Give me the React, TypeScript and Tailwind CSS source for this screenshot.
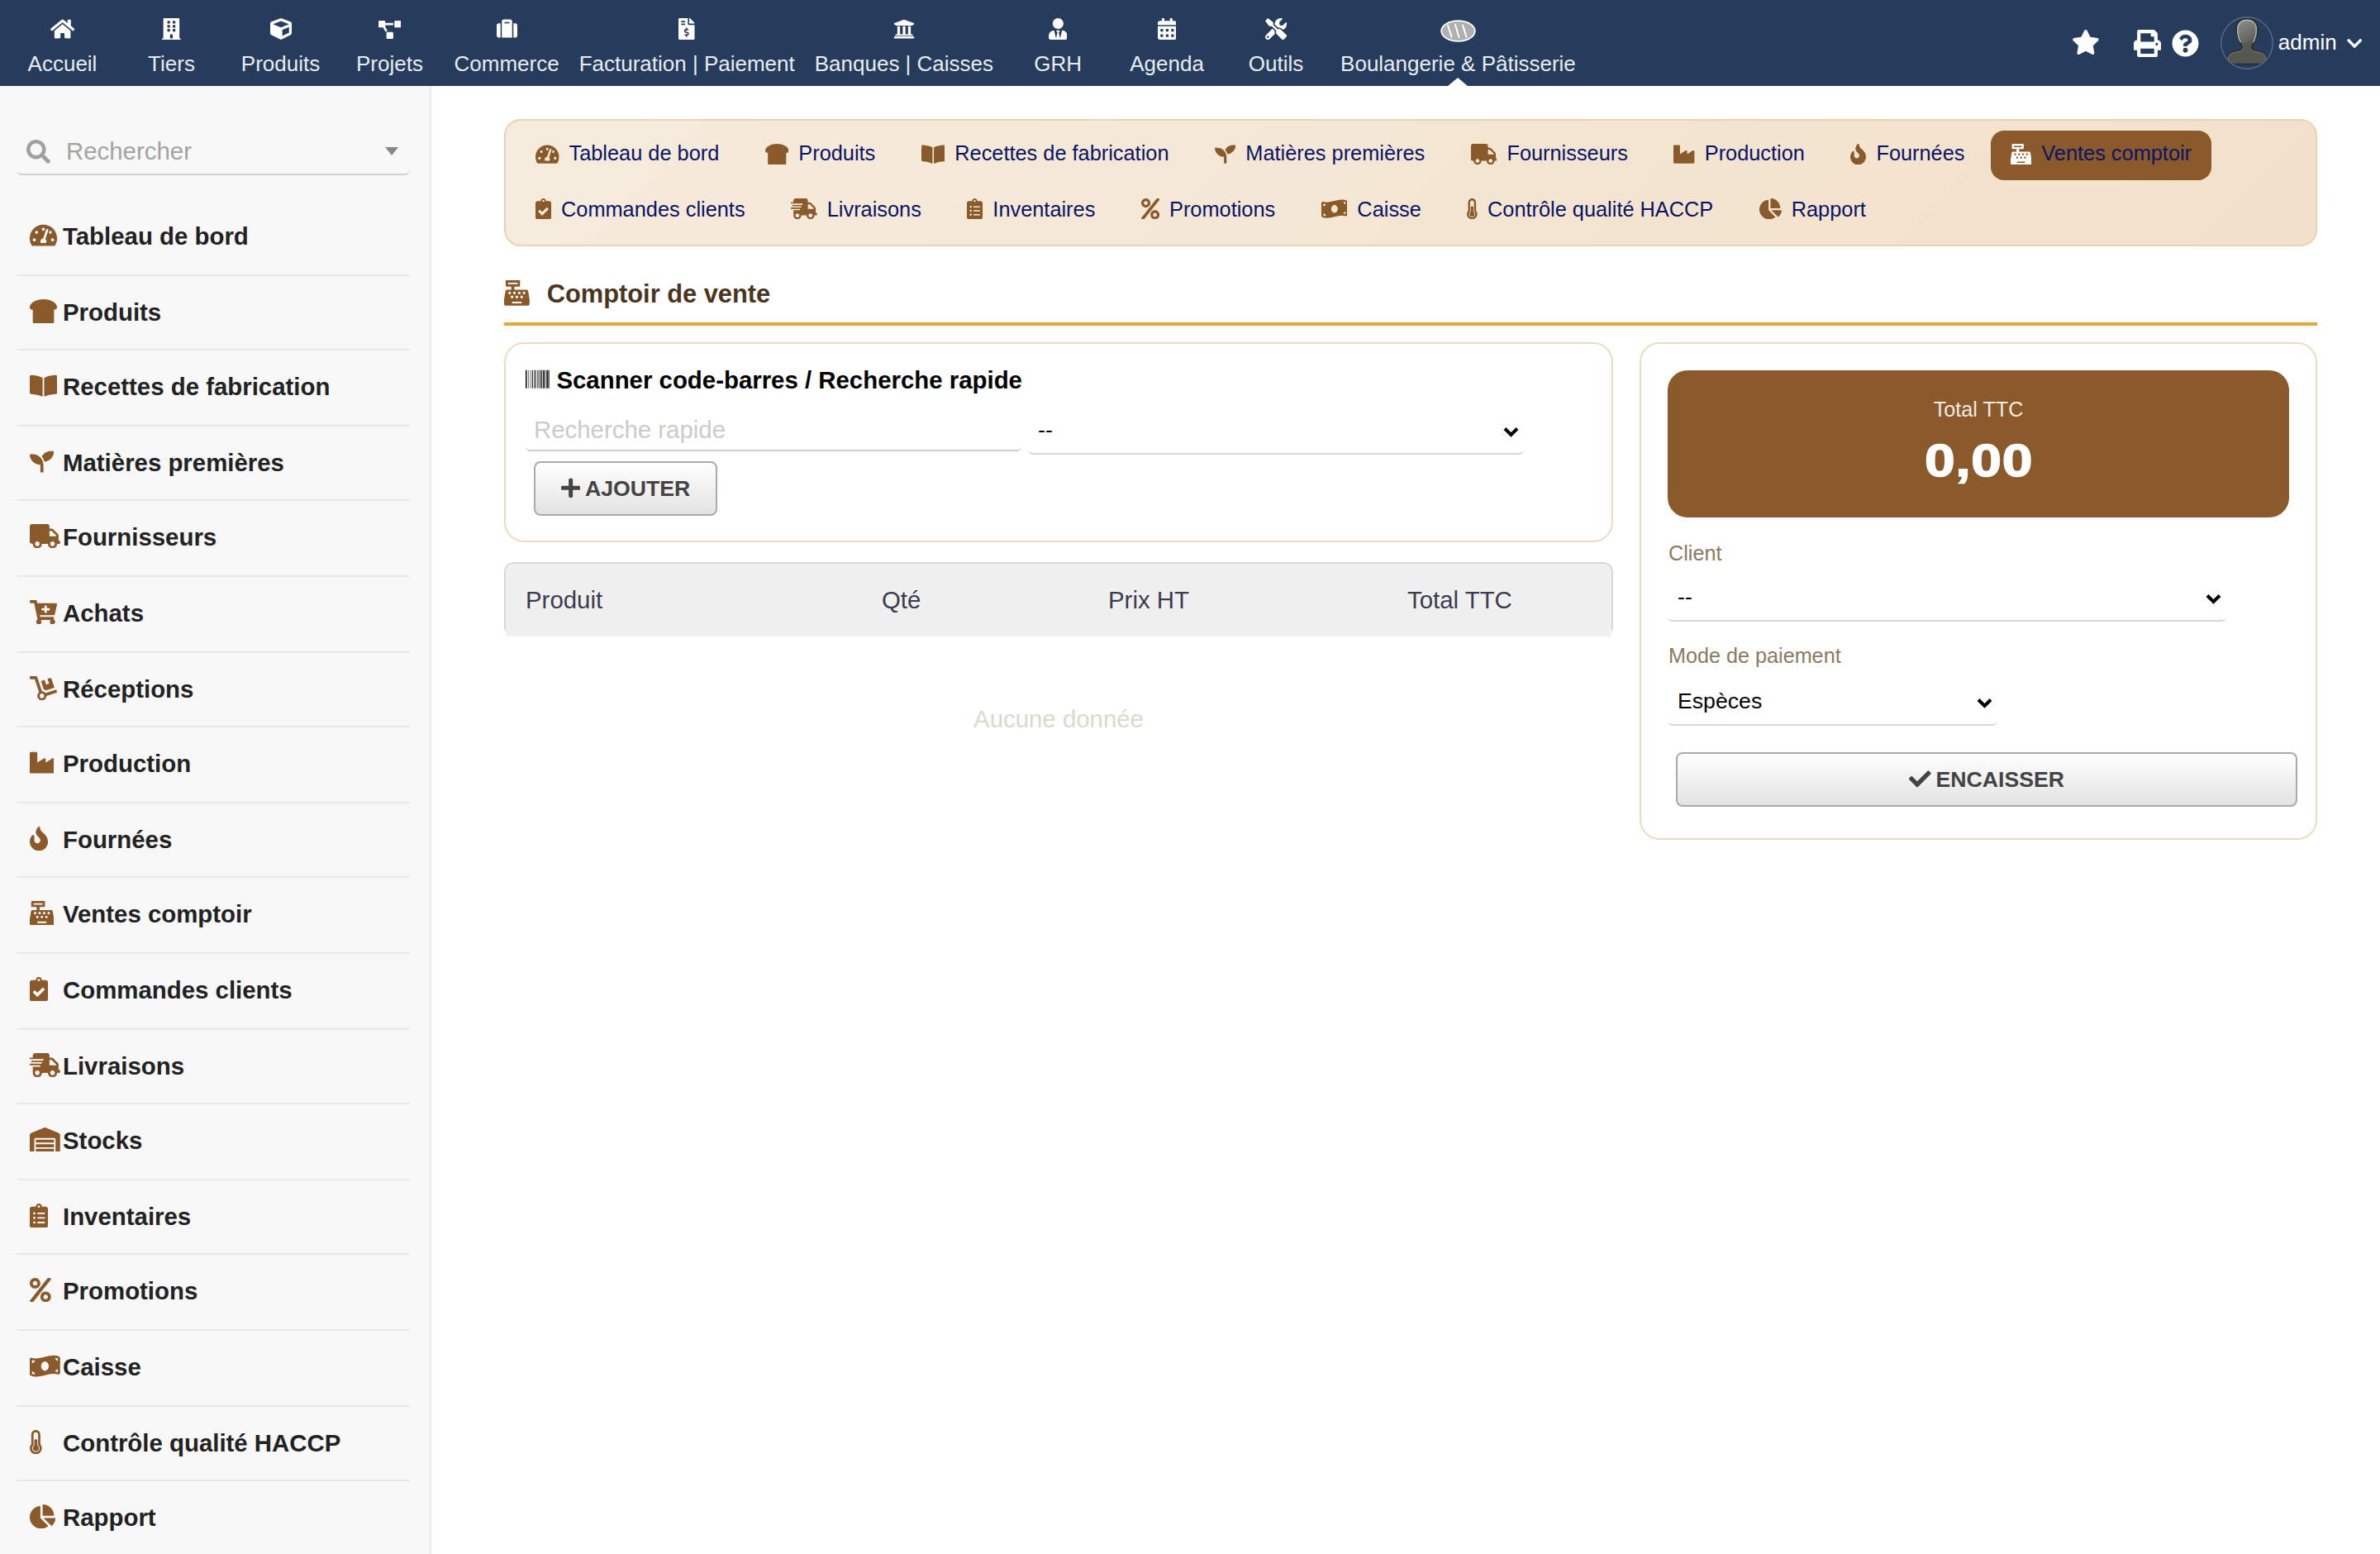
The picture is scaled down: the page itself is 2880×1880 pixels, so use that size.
import React from 'react';
import { IconContext, type IconType } from 'react-icons';
import {
  FaBarcode,
  FaBookOpen,
  FaBreadSlice,
  FaBuilding,
  FaCalendarAlt,
  FaCartPlus,
  FaCashRegister,
  FaChartPie,
  FaCheck,
  FaChevronDown,
  FaClipboardCheck,
  FaClipboardList,
  FaCube,
  FaDolly,
  FaFileInvoiceDollar,
  FaFire,
  FaHome,
  FaIndustry,
  FaMoneyBillWave,
  FaPercent,
  FaPlus,
  FaPrint,
  FaProjectDiagram,
  FaQuestionCircle,
  FaSearch,
  FaSeedling,
  FaShippingFast,
  FaStar,
  FaSuitcase,
  FaTachometerAlt,
  FaThermometerHalf,
  FaTools,
  FaTruck,
  FaUniversity,
  FaUserTie,
  FaWarehouse,
} from 'react-icons/fa';

type Entry = { label: string; icon: IconType; active?: boolean };

const topMenu: { label: string; icon: IconType; size: string }[] = [
  { label: 'Accueil', icon: FaHome, size: 'h-[26px]' },
  { label: 'Tiers', icon: FaBuilding, size: 'h-[26px]' },
  { label: 'Produits', icon: FaCube, size: 'h-[26px]' },
  { label: 'Projets', icon: FaProjectDiagram, size: 'h-[22px] mt-[2px]' },
  { label: 'Commerce', icon: FaSuitcase, size: 'h-[25px]' },
  { label: 'Facturation | Paiement', icon: FaFileInvoiceDollar, size: 'h-[26px]' },
  { label: 'Banques | Caisses', icon: FaUniversity, size: 'h-[26px]' },
  { label: 'GRH', icon: FaUserTie, size: 'h-[26px]' },
  { label: 'Agenda', icon: FaCalendarAlt, size: 'h-[26px]' },
  { label: 'Outils', icon: FaTools, size: 'h-[26px]' },
];

const sideMenu: { label: string; icon: IconType; height: string }[] = [
  { label: 'Tableau de bord', icon: FaTachometerAlt, height: 'h-[92px]' },
  { label: 'Produits', icon: FaBreadSlice, height: 'h-[90px]' },
  { label: 'Recettes de fabrication', icon: FaBookOpen, height: 'h-[92px]' },
  { label: 'Matières premières', icon: FaSeedling, height: 'h-[90px]' },
  { label: 'Fournisseurs', icon: FaTruck, height: 'h-[92px]' },
  { label: 'Achats', icon: FaCartPlus, height: 'h-[92px]' },
  { label: 'Réceptions', icon: FaDolly, height: 'h-[90px]' },
  { label: 'Production', icon: FaIndustry, height: 'h-[92px]' },
  { label: 'Fournées', icon: FaFire, height: 'h-[90px]' },
  { label: 'Ventes comptoir', icon: FaCashRegister, height: 'h-[92px]' },
  { label: 'Commandes clients', icon: FaClipboardCheck, height: 'h-[92px]' },
  { label: 'Livraisons', icon: FaShippingFast, height: 'h-[90px]' },
  { label: 'Stocks', icon: FaWarehouse, height: 'h-[92px]' },
  { label: 'Inventaires', icon: FaClipboardList, height: 'h-[90px]' },
  { label: 'Promotions', icon: FaPercent, height: 'h-[92px]' },
  { label: 'Caisse', icon: FaMoneyBillWave, height: 'h-[92px]' },
  { label: 'Contrôle qualité HACCP', icon: FaThermometerHalf, height: 'h-[90px]' },
  { label: 'Rapport', icon: FaChartPie, height: 'h-[92px]' },
];

const navRowOne: Entry[] = [
  { label: 'Tableau de bord', icon: FaTachometerAlt },
  { label: 'Produits', icon: FaBreadSlice },
  { label: 'Recettes de fabrication', icon: FaBookOpen },
  { label: 'Matières premières', icon: FaSeedling },
  { label: 'Fournisseurs', icon: FaTruck },
  { label: 'Production', icon: FaIndustry },
  { label: 'Fournées', icon: FaFire },
  { label: 'Ventes comptoir', icon: FaCashRegister, active: true },
];

const navRowTwo: Entry[] = [
  { label: 'Commandes clients', icon: FaClipboardCheck },
  { label: 'Livraisons', icon: FaShippingFast },
  { label: 'Inventaires', icon: FaClipboardList },
  { label: 'Promotions', icon: FaPercent },
  { label: 'Caisse', icon: FaMoneyBillWave },
  { label: 'Contrôle qualité HACCP', icon: FaThermometerHalf },
  { label: 'Rapport', icon: FaChartPie },
];

function BreadLogo() {
  return (
    <svg className="mt-[6px] h-[27px] w-[43px] shrink-0" viewBox="0 0 43 27" fill="none">
      <ellipse cx="21.5" cy="13.5" rx="20.3" ry="12.3" fill="#b0b0b0" stroke="#fff" strokeWidth="1.8" />
      <path d="M9 6.5 L13.5 20.5 M18 6 L22.5 21 M27 6.5 L31.5 20.5" stroke="#fff" strokeWidth="2" strokeLinecap="round" />
    </svg>
  );
}

function Avatar() {
  return (
    <svg className="ml-[26px] h-16 w-16 shrink-0" viewBox="0 0 64 64" fill="none">
      <defs>
        <linearGradient id="skin" x1="22" y1="4" x2="38" y2="36" gradientUnits="userSpaceOnUse">
          <stop offset="0" stopColor="#8e8f8c" />
          <stop offset="0.8" stopColor="#5f615d" />
          <stop offset="0.82" stopColor="#555751" />
        </linearGradient>
        <clipPath id="round">
          <circle cx="32" cy="32" r="31" />
        </clipPath>
      </defs>
      <g clipPath="url(#round)">
        <path
          d="M32 2.8c8 0 12.8 4.8 12.8 12.5 0 3.5-.6 6.4-1.6 10.2-.9 4-3.2 7-5 9.5-.6 2.5 0 4.5 2 5.5 4 2 9.5 1.5 13.3 4.5 2.5 2 3.5 5 3.5 12.5H7c0-7.5 1-10.5 3.5-12.5 3.8-3 9.3-2.5 13.3-4.5 2-1 2.6-3 2-5.5-1.8-2.5-4.1-5.5-5-9.500-1-3.800-1.600-6.700-1.600-10.200C19.200 7.600 24 2.800 32 2.800z"
          fill="url(#skin)"
          stroke="#2b2d2c"
          strokeWidth="1.6"
        />
        <path
          d="M24.5 31c-2-3-3.8-9.5-3.8-15.7C20.7 8.6 25 4.5 32 4.5s11.3 4.1 11.3 10.8c0 6.2-1.8 12.7-3.8 15.7"
          stroke="#b4b5b2"
          strokeWidth="1.4"
        />
        <path d="M9 52c1.5-8 5.5-8 10-9 4-.8 8-1.5 8.5-4.5M55 52c-1.5-8-5.5-8-10-9-4-.8-8-1.5-8.5-4.5" stroke="#7b7d78" strokeWidth="1" />
      </g>
      <circle cx="32" cy="32" r="31.2" stroke="#56688a" strokeWidth="1.5" />
    </svg>
  );
}

function TopBar() {
  return (
    <header className="flex h-[104px] shrink-0 items-start bg-[#263c5c] pl-[9.5px] pr-[22px] text-[26px] leading-[28px] text-white">
      {topMenu.map(({ label, icon: Icon, size }) => (
        <div key={label} className="flex min-w-[132px] flex-col items-center px-3 pt-[21px]">
          <div className="flex h-[27px] items-center">
            <Icon className={`${size} w-auto`} />
          </div>
          <span className="mt-[15px] whitespace-nowrap text-[#e9ebef]">{label}</span>
        </div>
      ))}
      <div className="relative flex h-[104px] flex-col items-center px-3 pt-[21px]">
        <div className="flex h-[27px] items-center">
          <BreadLogo />
        </div>
        <span className="mt-[15px] whitespace-nowrap text-[#e9ebef]">Boulangerie &amp; Pâtisserie</span>
        <div className="absolute bottom-0 left-1/2 -ml-3 h-0 w-0 border-x-[12px] border-b-[10px] border-x-transparent border-b-white" />
      </div>

      <div className="ml-auto flex h-[104px] items-center">
        <FaStar className="mb-0.5 h-[30px] w-auto" />
        <FaPrint className="ml-[41px] h-[33px] w-auto" />
        <FaQuestionCircle className="ml-[13px] h-[33px] w-auto" />
        <Avatar />
        <span className="mb-0.5 ml-[6px]">admin</span>
        <FaChevronDown className="ml-3 h-[21px] w-auto" />
      </div>
    </header>
  );
}

function SideBar() {
  return (
    <aside className="w-[522px] shrink-0 border-r-2 border-[#e9e9e9] bg-[#f8f8f8] pl-5 pr-6">
      <div className="mt-[50px] flex h-[58px] items-center rounded-md border-b-2 border-[#d0d0d0] pl-3 pr-[14px] pt-[2px]">
        <FaSearch className="h-[29px] w-auto text-[#a0a0a0]" />
        <span className="ml-[19px] text-[29.4px] leading-8 text-[#a3a3a3]">Rechercher</span>
        <span className="ml-auto h-0 w-0 border-x-8 border-t-[10px] border-x-transparent border-t-[#888888]" />
      </div>
      <nav className="mt-[30px]">
        {sideMenu.map(({ label, icon: Icon, height }) => (
          <a
            key={label}
            className={`${height} flex items-start border-b-2 border-[#e9e9e9] pl-4 pt-[28px] text-[29.4px] font-bold leading-8 text-[#222222] last:border-b-0`}
          >
            <span className="w-10 shrink-0 text-[#8b5a2b]">
              <Icon className="h-[29.4px] w-auto" />
            </span>
            <span className="whitespace-nowrap">{label}</span>
          </a>
        ))}
      </nav>
    </aside>
  );
}

function NavRow({ items, iconOffset }: { items: Entry[]; iconOffset: string }) {
  return (
    <div className="flex gap-[7.5px]">
      {items.map(({ label, icon: Icon, active }) => (
        <a
          key={label}
          className={`flex h-[60px] items-start gap-3 rounded-2xl px-6 pt-[13px] text-[25.35px] leading-[28px] text-[#0a1464] ${active ? 'bg-[#8b5a2b]' : ''}`}
        >
          <Icon className={`${iconOffset} h-[25.35px] w-auto shrink-0 ${active ? 'text-white' : 'text-[#8b5a2b]'}`} />
          <span className="whitespace-nowrap">{label}</span>
        </a>
      ))}
    </div>
  );
}

function SelectBox({ value, className }: { value: string; className: string }) {
  return (
    <div
      className={`${className} flex h-[52px] items-start justify-between rounded-md border-b-2 border-[#d8d8d8] pl-3 pr-[6px] pt-[7px] text-[26.67px] leading-[30px] text-black`}
    >
      <span>{value}</span>
      <svg className="mt-[11px] h-[13px] w-[19px]" viewBox="0 0 19 13" fill="none">
        <path d="M2 2.5 L9.5 10 L17 2.5" stroke="#000" strokeWidth="4" />
      </svg>
    </div>
  );
}

function Button({ label, icon: Icon, className }: { label: string; icon: IconType; className: string }) {
  return (
    <button
      className={`${className} ml-[10px] flex h-[66px] items-center justify-center gap-[6px] rounded-lg border-2 border-[#aaaaaa] bg-gradient-to-b from-white to-[#e3e3e3] pb-px text-[26.67px] font-bold leading-[30px] text-[#444444]`}
    >
      <Icon className="h-[26.67px] w-auto" />
      <span>{label}</span>
    </button>
  );
}

export default function App() {
  return (
    // "auto" lets each icon keep its own aspect ratio when only the height is set
    <IconContext.Provider value={{ size: 'auto' }}>
      <div className="flex h-[1880px] w-[2880px] flex-col overflow-hidden bg-white font-['Liberation_Sans',Arial,sans-serif]">
        <TopBar />
        <div className="flex min-h-0 flex-1">
          <SideBar />

          <main className="flex-1 pl-[88px] pr-[76px] pt-10">
            <div className="flex h-[154px] flex-col gap-2 rounded-[20px] border-2 border-[#e8d3b3] bg-[linear-gradient(135deg,#f6ecdd,#f2e0ca)] px-3 pt-3">
              <NavRow items={navRowOne} iconOffset="mt-[3px]" />
              <NavRow items={navRowTwo} iconOffset="mt-px" />
            </div>

            <div className="mt-[41px] flex h-[55px] items-start gap-[21px] border-b-4 border-[#e0a93f]">
              <FaCashRegister className="h-[30.8px] w-auto text-[#8b5a2b]" />
              <h1 className="mt-px text-[30.8px] font-bold leading-8 text-[#4a3520]">Comptoir de vente</h1>
            </div>

            <div className="mt-5 flex items-start gap-8">
              <section className="w-[1342px]">
                <div className="h-[242px] rounded-3xl border-2 border-[#ecdcc1] px-6 pt-[28px]">
                  <div className="flex items-start gap-2 text-[29.4px] font-bold leading-8 text-black">
                    <FaBarcode className="h-[29.4px] w-auto" />
                    <span>Scanner code-barres / Recherche rapide</span>
                  </div>
                  <div className="mt-[18px] flex items-start gap-2">
                    <div className="h-[52px] w-[600px] rounded-md border-b-2 border-[#d0d0d0] pl-[10px] pt-[10px] text-[29.4px] leading-8 text-[#cbcbcb]">
                      Recherche rapide
                    </div>
                    <SelectBox value="--" className="mt-1 w-[600px]" />
                  </div>
                  <Button label="AJOUTER" icon={FaPlus} className="mt-2 w-[222px]" />
                </div>

                <div className="mt-6 h-[90px] rounded-xl border-x-2 border-t-2 border-[#d8d8d8]">
                  <div className="grid h-[88px] grid-cols-[431px_274px_362px_1fr] rounded-t-[10px] bg-[#f0f0f0] pl-[24px] pt-[28px] text-[29.4px] leading-8 text-[#3c3c50]">
                    <span>Produit</span>
                    <span>Qté</span>
                    <span>Prix HT</span>
                    <span>Total TTC</span>
                  </div>
                </div>
                <p className="mt-[84px] text-center text-[29.4px] leading-8 text-[#ded8cd]">Aucune donnée</p>
              </section>

              <section className="h-[602px] w-[820px] rounded-3xl border-2 border-[#ecdcc1] p-8">
                <div className="flex h-[178px] flex-col items-center rounded-3xl bg-[#8b5a2b] pt-[33px] text-white">
                  <span className="text-[25.2px] leading-[28px] text-[#f1e9e2]">Total TTC</span>
                  <span className="mt-[16px] scale-x-[1.18] text-[56px] font-black leading-[64px] tracking-[0.5px] [-webkit-text-stroke:1.5px_white]">
                    0,00
                  </span>
                </div>
                <div className="mt-[29px] pl-px text-[25.2px] leading-[28px] text-[#8a7a60]">Client</div>
                <SelectBox value="--" className="mt-[17px] w-[676px]" />
                <div className="mt-[27px] pl-px text-[25.2px] leading-[28px] text-[#8a7a60]">Mode de paiement</div>
                <SelectBox value="Espèces" className="mt-[19px] w-[399px]" />
                <Button label="ENCAISSER" icon={FaCheck} className="mt-8 w-[752px]" />
              </section>
            </div>
          </main>
        </div>
      </div>
    </IconContext.Provider>
  );
}
